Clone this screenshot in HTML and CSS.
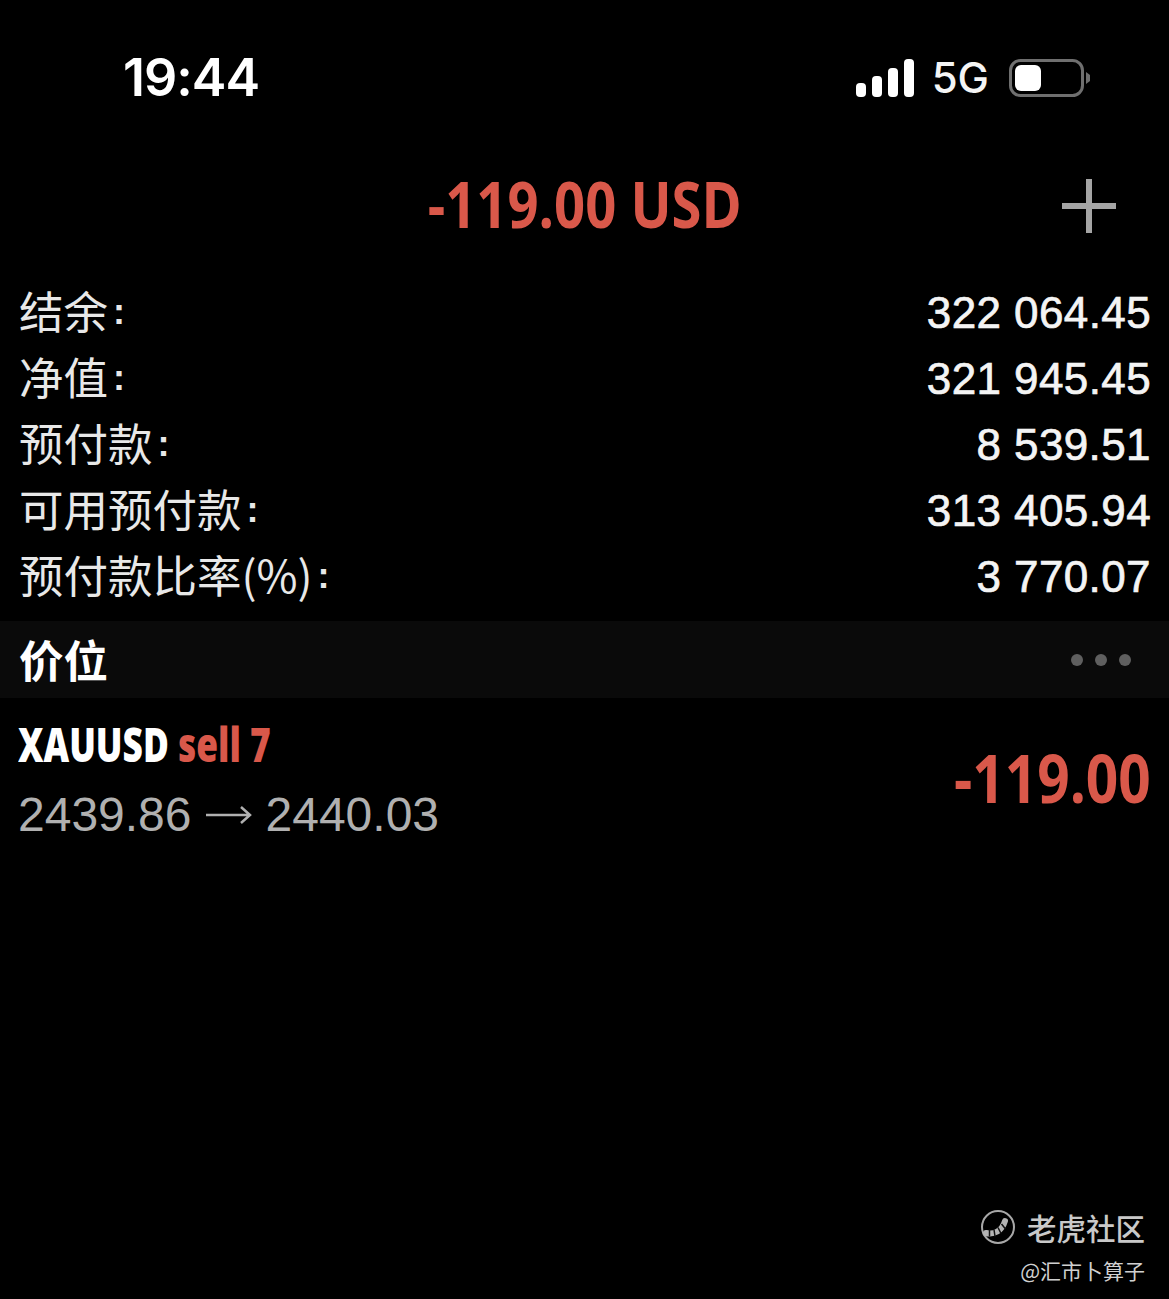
FILE: index.html
```html
<!DOCTYPE html>
<html lang="zh">
<head>
<meta charset="utf-8">
<title>价位</title>
<link rel="stylesheet" href="styles.css">
</head>
<body>
<main class="page">
  <header class="status">
    <span class="time">19:44</span>
    <div class="status-right">
      <svg class="signal" width="58" height="38" viewBox="0 0 58 38"><rect x="0" y="24" width="10" height="14" rx="4"/><rect x="16" y="17" width="10" height="21" rx="4"/><rect x="32" y="9" width="10" height="29" rx="4"/><rect x="48" y="0" width="10" height="38" rx="4"/></svg>
      <span class="net">5G</span>
      <svg class="battery" width="82" height="38" viewBox="0 0 82 38"><rect x="1.5" y="1.5" width="72" height="35" rx="10" fill="none" stroke="#6f6f6f" stroke-width="3"/><rect x="6" y="6" width="26" height="26" rx="6" fill="#fff"/><path d="M77 13l4 3v6l-4 3z" fill="#6f6f6f"/></svg>
    </div>
  </header>

  <section class="title-bar">
    <h1 class="total"><span class="squeeze">-119.00 USD</span></h1>
    <svg class="plus" width="54" height="54" viewBox="0 0 54 54"><path d="M24 0h6v54h-6zM0 24h54v6H0z" fill="#a5a5a5"/></svg>
  </section>

  <dl class="stats">
    <div class="stat"><dt>结余<span class="colon">:</span></dt><dd>322 064.45</dd></div>
    <div class="stat"><dt>净值<span class="colon">:</span></dt><dd>321 945.45</dd></div>
    <div class="stat"><dt>预付款<span class="colon">:</span></dt><dd>8 539.51</dd></div>
    <div class="stat"><dt>可用预付款<span class="colon">:</span></dt><dd>313 405.94</dd></div>
    <div class="stat"><dt>预付款比率(%)<span class="colon">:</span></dt><dd>3 770.07</dd></div>
  </dl>

  <section class="band">
    <h2 class="band-title">价位</h2>
    <div class="dots"><i></i><i></i><i></i></div>
  </section>

  <section class="position">
    <div class="pos-left">
      <div class="pos-name"><span class="squeeze-sm"><b class="sym">XAUUSD</b> <b class="side">sell 7</b></span></div>
      <div class="pos-price"><span>2439.86</span><svg class="arrow" width="46" height="20" viewBox="0 0 46 20" fill="none" stroke="#b0b0b0" stroke-width="2.5"><path d="M0 10h44M35 2l9 8-9 8"/></svg><span>2440.03</span></div>
    </div>
    <div class="pos-profit"><span class="squeeze-r">-119.00</span></div>
  </section>

  <footer class="mark">
    <div class="mark-top">
      <svg class="logo" width="36" height="36" viewBox="0 0 36 36" fill="none"><circle cx="18" cy="18" r="16" stroke="#a8a8a8" stroke-width="2"/><path d="M6 24c8 2 16-2 19-12" stroke="#b4b4b4" stroke-width="6" stroke-linecap="round"/><path d="M9.500 20.500v7M14 20.500l1 7M18 18.500l3 6M21.500 15l4 5" stroke="#111" stroke-width="1.500"/></svg>
      <span class="brand">老虎社区</span>
    </div>
    <div class="author">@汇市卜算子</div>
  </footer>
</main>
</body>
</html>
```
FILE: styles.css
```css
* { box-sizing: border-box; margin: 0; padding: 0; }
html, body { background: #000; }
body { width: 1169px; height: 1299px; overflow: hidden; font-family: "Liberation Sans", "Noto Sans CJK SC", sans-serif; color: #f2f2f2; }
.page { height: 1299px; display: flex; flex-direction: column; }

.status { height: 156px; display: flex; justify-content: space-between; align-items: flex-start; padding: 50px 78px 0 123px; }
.time { font: 600 52px/56px Inter, sans-serif; color: #fff; letter-spacing: -1px; }
.status-right { display: flex; align-items: center; gap: 20px; height: 56px; }
.signal { fill: #fff; margin-right: -2px; }
.net { font: 500 42px/56px Inter, sans-serif; color: #f5f5f5; }

.title-bar { height: 100px; position: relative; display: flex; justify-content: center; align-items: center; padding-bottom: 4px; }
.total { font: 700 64px/96px "Open Sans", sans-serif; color: #d9584a; }
.squeeze { display: inline-block; transform: scaleX(.85); white-space: nowrap; }
.plus { position: absolute; left: 1062px; top: 23px; }

.stats { padding: 24px 18px 0 19px; height: 365px; }
.stat { height: 66px; display: flex; justify-content: space-between; align-items: center; }
dt { font: 400 44.5px/66px "Noto Sans CJK SC", sans-serif; color: #e8e8e8; padding-bottom: 6px; display: flex; align-items: center; }
.colon { font: 700 36px/66px "Liberation Sans", sans-serif; margin-left: 5px; position: relative; top: 2px; }
dd { font: 400 44px/66px "Liberation Sans", sans-serif; color: #f4f4f4; -webkit-text-stroke: .7px #f4f4f4; letter-spacing: .4px; }

.band { height: 77px; background: #0a0a0a; display: flex; justify-content: space-between; align-items: center; padding: 0 38px 0 19px; }
.band-title { font: 700 44.5px/77px "Noto Sans CJK SC", sans-serif; color: #fff; padding-bottom: 2px; }
.dots { display: flex; gap: 12px; }
.dots i { width: 12px; height: 12px; border-radius: 50%; background: #5f5f5f; }

.position { height: 148px; display: flex; justify-content: space-between; align-items: center; padding: 10px 18px 0 18px; }
.pos-name { font: 700 48px/62px "Open Sans", sans-serif; height: 62px; margin-top: 4px; white-space: nowrap; }
.squeeze-sm { display: inline-block; transform: scaleX(.735); transform-origin: left center; }
.sym { color: #fff; }
.side { color: #d9584a; }
.pos-price { font: 400 48px/62px "Liberation Sans", sans-serif; color: #b0b0b0; margin-top: 9px; display: flex; align-items: center; gap: 14px; white-space: nowrap; }
.arrow { flex: none; }
.pos-profit { font: 700 66px/80px "Open Sans", sans-serif; color: #d9584a; }
.squeeze-r { display: inline-block; transform: scaleX(.86); transform-origin: right center; }

.mark { margin-top: auto; padding: 0 24px 14px 0; display: flex; flex-direction: column; align-items: flex-end; }
.mark-top { display: flex; align-items: center; gap: 11px; }
.brand { font: 500 29.5px/40px "Noto Sans CJK SC", sans-serif; color: #c9c9c9; }
.author { font: 400 21px/30px "Noto Sans CJK SC", sans-serif; color: #d0d0d0; margin-top: 8px; }
```
